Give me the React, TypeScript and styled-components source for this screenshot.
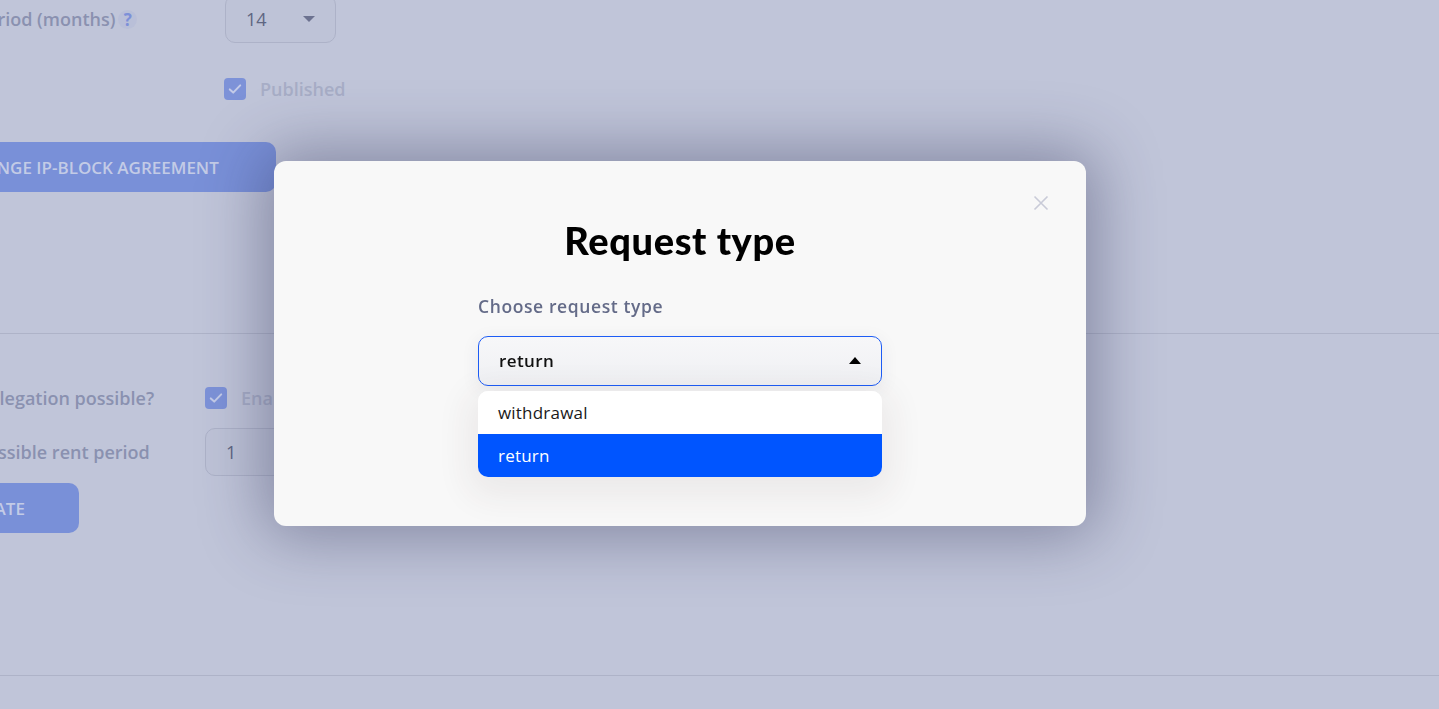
import React from "react";
import styled, { createGlobalStyle } from "styled-components";

const GlobalStyle = createGlobalStyle`
  html, body {
    margin: 0;
    padding: 0;
    background: #c0c5d9;
    overflow: hidden;
  }
  body {
    font-family: "Open Sans", "Liberation Sans", sans-serif;
  }
  * { box-sizing: border-box; }
`;

/* ---------- dimmed background page ---------- */

const Page = styled.div`
  width: 1439px;
  height: 709px;
  overflow: hidden;
  background: #c0c5d9;
`;

const Content = styled.div`
  margin-left: -95px;
  display: flex;
  flex-direction: column;
`;

const Section = styled.section<{ $pb: number; $mt?: number }>`
  display: flex;
  flex-direction: column;
  margin-top: ${(p) => p.$mt ?? 0}px;
  padding-bottom: ${(p) => p.$pb}px;
  border-bottom: 1px solid #aeb3c8;
`;

const FieldRow = styled.div<{ $labelWidth: number; $mt?: number; $h: number }>`
  display: grid;
  grid-template-columns: ${(p) => p.$labelWidth}px auto;
  align-items: center;
  height: ${(p) => p.$h}px;
  margin-top: ${(p) => p.$mt ?? 0}px;
`;

const Label = styled.span`
  padding-left: 71px;
  font-size: 18px;
  font-weight: 600;
  color: #8a91b0;
  display: flex;
  align-items: center;
  gap: 3px;
  white-space: nowrap;
`;

const Help = styled.span`
  display: inline-flex;
  align-items: center;
  justify-content: center;
  width: 19px;
  height: 19px;
  border-radius: 50%;
  background: #b9bfd8;
  color: #7d90d8;
  font-size: 17px;
  font-weight: 700;
`;

const GhostSelect = styled.div<{ $w: number }>`
  width: ${(p) => p.$w}px;
  height: 48px;
  border: 1px solid #adb2c8;
  border-radius: 10px;
  background: #bec3d7;
  display: flex;
  align-items: center;
  justify-content: space-between;
  padding: 0 20px 0 20px;
  font-size: 18px;
  color: #5f6682;
`;

const CaretDown = styled.span`
  width: 0;
  height: 0;
  border-left: 6px solid transparent;
  border-right: 6px solid transparent;
  border-top: 6px solid #6c7290;
`;

const CheckLine = styled.label`
  display: flex;
  align-items: center;
  gap: 14px;
  font-size: 18px;
  font-weight: 600;
  color: #a7adc6;
`;

const CheckBox = styled.span`
  width: 22px;
  height: 22px;
  border-radius: 4px;
  background: #7d92d8;
  display: inline-flex;
  align-items: center;
  justify-content: center;
`;

const PageButton = styled.button<{ $mt: number; $px: number }>`
  align-self: flex-start;
  margin-top: ${(p) => p.$mt}px;
  height: 50px;
  padding: 0 ${(p) => p.$px}px;
  border: none;
  border-radius: 10px;
  background: #7990d8;
  color: #c3cbe6;
  font-family: "Open Sans", sans-serif;
  font-size: 17px;
  font-weight: 600;
  text-transform: uppercase;
`;

/* ---------- modal ---------- */

const Overlay = styled.div`
  position: fixed;
  inset: 0;
  display: flex;
  align-items: center;
  justify-content: center;
  padding: 0 79px 22px 0;
`;

const Modal = styled.div`
  position: relative;
  width: 812px;
  height: 365px;
  background: #f8f8f8;
  border-radius: 12px;
  box-shadow: 0 0 64px 10px rgba(40, 42, 80, 0.4);
  display: flex;
  flex-direction: column;
  align-items: center;
  padding-top: 57px;
`;

const CloseButton = styled.button`
  position: absolute;
  top: 34px;
  right: 37px;
  width: 16px;
  height: 16px;
  padding: 0;
  border: none;
  background: none;
  display: flex;
`;

const Title = styled.h2`
  margin: 0;
  height: 44px;
  line-height: 44px;
  font-family: "Lato", "Noto Sans", sans-serif;
  font-weight: 900;
  font-size: 38px;
  color: #000;
  letter-spacing: 0.6px;
`;

const Form = styled.div`
  width: 404px;
  margin-top: 32px;
  display: flex;
  flex-direction: column;
`;

const FormLabel = styled.div`
  font-size: 17.5px;
  line-height: 24px;
  font-weight: 600;
  color: #646b88;
  letter-spacing: 0.6px;
`;

const SelectWrap = styled.div`
  position: relative;
  margin-top: 18px;
`;

const SelectControl = styled.div`
  height: 50px;
  border: 1px solid #1d5cf5;
  border-radius: 10px;
  background: linear-gradient(#f7f7f9, #eff0f3);
  box-shadow: 0 4px 18px rgba(60, 60, 90, 0.08);
  display: flex;
  align-items: center;
  justify-content: space-between;
  padding: 0 20px 1px 20px;
  font-size: 17px;
  font-weight: 600;
  color: #111;
  letter-spacing: 0.4px;
`;

const CaretUp = styled.span`
  width: 0;
  height: 0;
  border-left: 6px solid transparent;
  border-right: 6px solid transparent;
  border-bottom: 7px solid #000;
  margin-bottom: 1px;
`;

const Menu = styled.ul`
  position: absolute;
  left: 0;
  right: 0;
  top: 55px;
  margin: 0;
  padding: 0;
  list-style: none;
  background: #fff;
  border-radius: 10px;
  overflow: hidden;
  box-shadow: 0 10px 34px 10px rgba(70, 40, 40, 0.07);
`;

const Option = styled.li<{ $active?: boolean }>`
  height: 43px;
  display: flex;
  align-items: center;
  padding-left: 20px;
  padding-bottom: 1px;
  font-size: 17px;
  letter-spacing: 0.2px;
  color: ${(p) => (p.$active ? "#fff" : "#1a1a1a")};
  background: ${(p) => (p.$active ? "#0055ff" : "#fff")};
`;

const Check = () => (
  <svg width="16" height="16" viewBox="0 0 16 16" fill="none">
    <path d="M2.8 8.4l3.4 3.2L13.2 4.4" stroke="#c4cbe8" strokeWidth="2" strokeLinecap="round" strokeLinejoin="round" />
  </svg>
);

export default function App() {
  return (
    <>
      <GlobalStyle />
      <Page>
        <Content>
          <Section $pb={141} $mt={-5}>
            <FieldRow $labelWidth={320} $h={48}>
              <Label>
                Period (months)<Help>?</Help>
              </Label>
              <GhostSelect $w={111}>
                <span>14</span>
                <CaretDown />
              </GhostSelect>
            </FieldRow>
            <FieldRow $labelWidth={319} $h={22} $mt={34}>
              <span />
              <CheckLine>
                <CheckBox>
                  <Check />
                </CheckBox>
                Published
              </CheckLine>
            </FieldRow>
            <PageButton $mt={43} $px={57}>Change IP-block agreement</PageButton>
          </Section>
          <Section $pb={142}>
            <FieldRow $labelWidth={300} $h={22} $mt={52}>
              <Label>Delegation possible?</Label>
              <CheckLine>
                <CheckBox>
                  <Check />
                </CheckBox>
                Enabled
              </CheckLine>
            </FieldRow>
            <FieldRow $labelWidth={300} $h={50} $mt={19}>
              <Label>Possible rent period</Label>
              <GhostSelect $w={111}>
                <span>1</span>
              </GhostSelect>
            </FieldRow>
            <PageButton $mt={6} $px={54}>Update</PageButton>
          </Section>
        </Content>
      </Page>
      <Overlay>
        <Modal>
          <CloseButton aria-label="Close">
            <svg width="16" height="16" viewBox="0 0 16 16">
              <path d="M1.5 1.5l13 13M14.5 1.5l-13 13" stroke="#c9cbd8" strokeWidth="1.6" />
            </svg>
          </CloseButton>
          <Title>Request type</Title>
          <Form>
            <FormLabel>Choose request type</FormLabel>
            <SelectWrap>
              <SelectControl>
                <span>return</span>
                <CaretUp />
              </SelectControl>
              <Menu>
                <Option>withdrawal</Option>
                <Option $active>return</Option>
              </Menu>
            </SelectWrap>
          </Form>
        </Modal>
      </Overlay>
    </>
  );
}
